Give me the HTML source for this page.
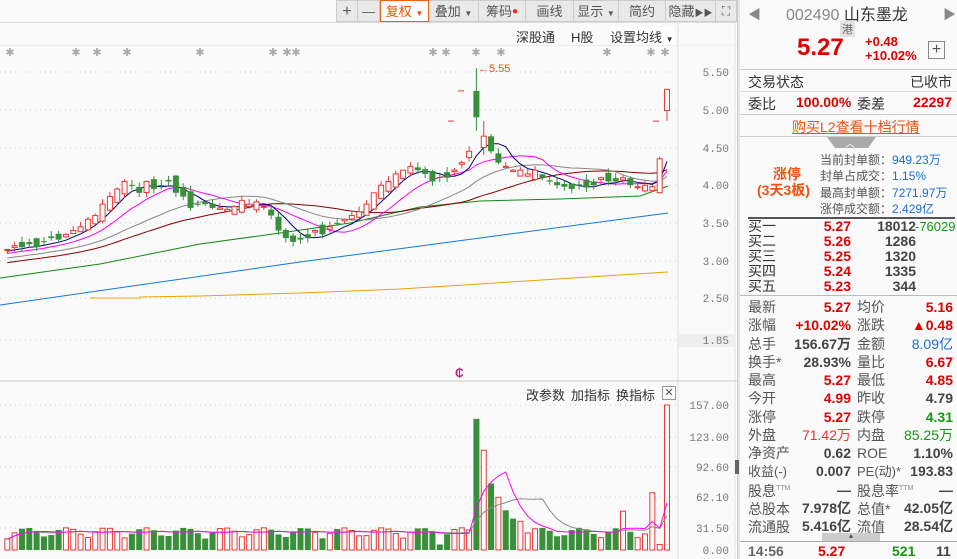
<!DOCTYPE html>
<html><head><meta charset="utf-8">
<style>
*{margin:0;padding:0;box-sizing:border-box}
body{width:957px;height:559px;overflow:hidden;background:#fafafa;font-family:"Liberation Sans","Noto Sans CJK SC",sans-serif;position:relative;font-size:13px;color:#333}
.a{position:absolute;white-space:nowrap}
.tb{position:absolute;top:0;height:22px;background:#e9e9e9;border:1px solid #ccc;border-left:none;font-size:13px;color:#555;text-align:center;line-height:21px}
.r{color:#e00000}.g{color:#119911}.b{color:#1a6fcc}.gr{color:#555}
sup{font-size:7px;line-height:0;vertical-align:6px;color:#888}
</style></head><body>
<div class="a" style="left:0;top:0;width:737px;height:23px;background:#fafafa;border-bottom:1px solid #ddd"></div>
<div class="tb" style="left:336px;width:22px;border-left:1px solid #ccc;font-size:16px">+</div>
<div class="tb" style="left:358px;width:22px">—</div>
<div class="tb" style="left:380px;width:49px;background:#fff;border:1px solid #f06010;color:#f05000">复权 <span style="font-size:8px">▼</span></div>
<div class="tb" style="left:429px;width:50px">叠加 <span style="font-size:8px">▼</span></div>
<div class="tb" style="left:479px;width:47px">筹码<span style="color:#f22;font-size:10px;vertical-align:top">●</span></div>
<div class="tb" style="left:526px;width:48px">画线</div>
<div class="tb" style="left:574px;width:45px">显示 <span style="font-size:8px">▼</span></div>
<div class="tb" style="left:619px;width:47px">简约</div>
<div class="tb" style="left:666px;width:50px">隐藏<span style="font-size:9px">▶▶</span></div>
<div class="tb" style="left:716px;width:21px;font-size:12px">⛶</div>
<div class="a" style="left:516px;top:27px;font-size:13px">深股通</div>
<div class="a" style="left:571px;top:27px;font-size:13px">H股</div>
<div class="a" style="left:610px;top:27px;font-size:13px;background:#fff">设置均线 <span style="font-size:8px">▼</span></div>
<div class="a" style="left:0;top:45px;width:678px;height:1px;background:#eee"></div>
<svg class="a" style="left:0;top:0" width="740" height="559" id="ch"></svg>
<div class="a" style="left:455px;top:366px;color:#e0108a;font-weight:bold;font-size:12px">₵</div>
<div class="a" style="left:526px;top:385px;font-size:13px">改参数</div>
<div class="a" style="left:571px;top:385px;font-size:13px">加指标</div>
<div class="a" style="left:616px;top:385px;font-size:13px">换指标</div>
<div class="a" style="left:662px;top:386px;width:14px;height:14px;border:1px solid #999;font-size:11px;line-height:12px;text-align:center;color:#555">✕</div>
<div class="a" style="left:737px;top:0;width:3px;height:559px;background:#e6e6e6;border-left:1px solid #ccc"></div>
<div class="a" style="left:735px;top:460px;width:4px;height:14px;background:#666"></div>
<div>
<div class="a" style="left:748px;top:4px;color:#888;font-size:13px">◀</div>
<div class="a" style="left:943px;top:4px;color:#888;font-size:13px">▶</div>
<div class="a" style="left:786px;top:1px;font-size:16px;color:#888">002490 <span style="color:#333">山东墨龙</span></div>
<div class="a" style="left:840px;top:21px;font-size:11px;background:#e2e2e2;color:#666;padding:0 2px">港</div>
<div class="a r" style="left:797px;top:34px;font-size:24px;font-weight:bold">5.27</div>
<div class="a r" style="left:865px;top:34px;font-size:13px;font-weight:bold">+0.48</div>
<div class="a r" style="left:865px;top:48px;font-size:13px;font-weight:bold">+10.02%</div>
<div class="a" style="left:928px;top:41px;width:17px;height:18px;border:1px solid #888;text-align:center;line-height:15px;font-size:16px;color:#555">+</div>
<div class="a" style="left:740px;top:69px;width:217px;height:1px;background:#ccc"></div>
<div class="a" style="left:748px;top:72px;font-size:14px">交易状态</div>
<div class="a" style="right:5px;top:72px;font-size:14px">已收市</div>
<div class="a" style="left:740px;top:91px;width:217px;height:1px;background:#ddd"></div>
<div class="a" style="left:748px;top:94px;font-size:14px">委比</div>
<div class="a r" style="left:796px;top:94px;font-size:14px;font-weight:bold">100.00%</div>
<div class="a" style="left:857px;top:94px;font-size:14px">委差</div>
<div class="a r" style="right:5px;top:94px;font-size:14px;font-weight:bold">22297</div>
<div class="a" style="left:740px;top:114px;width:217px;height:1px;background:#ccc"></div>
<div class="a" style="left:792px;top:117px;font-size:14px;color:#f05010;text-decoration:underline">购买L2查看十档行情</div>
<div class="a" style="left:740px;top:136px;width:217px;height:1px;background:#ccc"></div>
<div class="a" style="left:827px;top:137px;height:0;border-top:11px solid #aaa;border-left:8px solid transparent;border-right:8px solid transparent;width:49px"></div>
<div class="a" style="left:845px;top:135px;color:#fff;font-size:10px">︿</div>
<div class="a" style="left:773px;top:164px;font-size:14px;color:#f05010;font-weight:bold">涨停</div>
<div class="a" style="left:757px;top:180px;font-size:14px;color:#f05010;font-weight:bold">(3天3板)</div>
<div class="a" style="left:820px;top:152px;font-size:12px;line-height:16.3px;color:#555">当前封单额：<span class="b">949.23万</span><br>封单占成交：<span class="b">1.15%</span><br>最高封单额：<span class="b">7271.97万</span><br>涨停成交额：<span class="b">2.429亿</span></div>
<div class="a" style="left:748px;top:217px;width:207px;height:2px;background:#555"></div>
<div class="a" style="left:748px;top:219px;font-size:14px;line-height:15px">买一<br>买二<br>买三<br>买四<br>买五</div>
<div class="a r" style="left:800px;width:51px;text-align:right;top:219px;font-size:14px;line-height:15px;font-weight:bold">5.27<br>5.26<br>5.25<br>5.24<br>5.23</div>
<div class="a" style="left:860px;width:56px;text-align:right;top:219px;font-size:14px;line-height:15px;font-weight:bold;color:#444">18012<br>1286<br>1320<br>1335<br>344</div>
<div class="a g" style="left:915px;top:219px;font-size:13px">-76029</div>
<div class="a" style="left:740px;top:295px;width:217px;height:1px;background:#bbb"></div>
<div class="a" style="left:748px;top:298px;font-size:14px;line-height:18.25px;color:#555">最新<br>涨幅<br>总手<br>换手*<br>最高<br>今开<br>涨停<br>外盘<br>净资产<br><span style="font-size:13px">收益(-)</span><br>股息<sup>TTM</sup><br>总股本<br>流通股</div>
<div class="a" style="left:790px;width:61px;text-align:right;top:298px;font-size:14px;line-height:18.25px;font-weight:bold;color:#444"><span class="r">5.27</span><br><span class="r">+10.02%</span><br>156.67万<br>28.93%<br><span class="r">5.27</span><br><span class="r">4.99</span><br><span class="r">5.27</span><br><span style="color:#e33;font-weight:normal">71.42万</span><br>0.62<br>0.007<br>—<br>7.978亿<br>5.416亿</div>
<div class="a" style="left:857px;top:298px;font-size:14px;line-height:18.25px;color:#555">均价<br>涨跌<br>金额<br>量比<br>最低<br>昨收<br>跌停<br>内盘<br>ROE<br><span style="font-size:13px">PE(动)*</span><br>股息率<sup>TTM</sup><br>总值*<br>流值</div>
<div class="a" style="left:880px;width:73px;text-align:right;top:298px;font-size:14px;line-height:18.25px;font-weight:bold;color:#444"><span class="r">5.16</span><br><span class="r">▲0.48</span><br><span class="b" style="font-weight:normal">8.09亿</span><br><span class="r">6.67</span><br><span class="r">4.85</span><br>4.79<br><span class="g">4.31</span><br><span class="g" style="font-weight:normal">85.25万</span><br>1.10%<br>193.83<br>—<br>42.05亿<br>28.54亿</div>
<div class="a" style="left:822px;top:533px;width:58px;height:8px;background:#ccc;font-size:7px;text-align:center;line-height:8px;color:#555">▲</div>
<div class="a" style="left:740px;top:541px;width:217px;height:1px;background:#aaa"></div>
<div class="a" style="left:748px;top:543px;font-size:14px;color:#666;font-weight:bold">14:56</div>
<div class="a r" style="left:818px;top:543px;font-size:14px;font-weight:bold">5.27</div>
<div class="a g" style="left:892px;top:543px;font-size:14px;font-weight:bold">521</div>
<div class="a" style="left:936px;top:543px;font-size:14px;font-weight:bold;color:#444">11</div>
</div>
<script>
var C=[3.15,3.2,3.18,3.22,3.18,3.25,3.3,3.28,3.35,3.4,3.45,3.55,3.6,3.75,3.85,3.95,4.05,4.0,3.9,4.05,3.95,4.0,4.05,3.9,3.85,3.7,3.75,3.75,3.7,3.7,3.68,3.72,3.8,3.75,3.78,3.72,3.6,3.4,3.3,3.25,3.28,3.3,3.4,3.35,3.45,3.5,3.55,3.6,3.65,3.75,3.9,4.0,4.05,4.15,4.2,4.25,4.2,4.15,4.05,4.1,4.1,4.2,4.3,4.45,4.9,4.65,4.45,4.3,4.25,4.2,4.2,4.15,4.2,4.1,4.05,4.0,3.98,3.95,4.0,3.97,4.0,4.1,4.05,4.05,4.1,4.0,3.98,4.0,3.98,4.35,5.27];
function Y(p){return 72+(5.5-p)*75.5}
function X(i){return 7.3+i*7.33}
var s='';
[72,110,148,185,223,261,298,340].forEach(function(y){s+='<line x1="0" x2="678" y1="'+y+'" y2="'+y+'" stroke="#ccc" stroke-dasharray="1,4"/>'});
[405,437,467,497,528].forEach(function(y){s+='<line x1="0" x2="678" y1="'+y+'" y2="'+y+'" stroke="#ccc" stroke-dasharray="1,4"/>'});
s+='<line x1="678" x2="678" y1="23" y2="559" stroke="#ddd"/><line x1="735" x2="735" y1="23" y2="559" stroke="#e4e4e4"/>';
s+='<line x1="0" x2="737" y1="381" y2="381" stroke="#ccc"/><line x1="678" x2="737" y1="45" y2="45" stroke="#eee"/>';
s+='<rect x="679" y="334" width="56" height="13" fill="#eee"/>';
var L=[['5.50',72],['5.00',110],['4.50',148],['4.00',185],['3.50',223],['3.00',261],['2.50',298],['1.85',340],['157.00',405],['123.00',437],['92.60',467],['62.10',497],['31.50',528],['0.00',550]];
L.forEach(function(l){s+='<text x="729" y="'+(l[1]+4)+'" text-anchor="end" font-family="Liberation Mono,monospace" font-size="11" fill="#777">'+l[0]+'</text>'});
[10,76,97,127,200,273,287,296,433,446,476,501,607,651,665].forEach(function(x){s+='<text x="'+x+'" y="56" text-anchor="middle" font-size="11" fill="#aaa">✱</text>'});
function ma(n){var pts=[];for(var i=0;i<C.length;i++){var t=0;for(var k=0;k<n;k++){var j=i-k;t+=j>=0?C[j]:C[0]-(-j)*0.012;}pts.push(X(i).toFixed(1)+','+Y(t/n).toFixed(1));}return pts.join(' ');}
function pl(p,c){s+='<polyline points="'+p+'" fill="none" stroke="'+c+'" stroke-width="1"/>';}
pl('0,305 300,262 668,213','#1177dd');
pl('90,298 140,298 140,297 200,296 300,293 400,289 668,272','#f0a000');
pl('0,278 100,264 200,244 280,233 350,223 420,207 480,201 560,199 640,196 668,186','#118811');
pl(ma(30),'#880000');pl(ma(20),'#888');pl(ma(10),'#ff00ff');pl(ma(5),'#000080');
var V=[];
for(var i=0;i<C.length;i++){
 var c=C[i],o=(i?C[i-1]:c)+Math.sin(i*12.9)*0.08,h=null,l=null;
 if(i==64){o=5.25;c=4.9;h=5.55;l=4.72;}
 if(i==90){o=4.99;h=5.27;l=4.85;}
 if(i==65){o=4.5;h=4.85;l=4.4;}
 if(h===null)h=Math.max(o,c)+Math.abs(Math.sin(i*7.1))*0.07;
 if(l===null)l=Math.min(o,c)-Math.abs(Math.cos(i*3.3))*0.06;
 var up=c>=o,x=X(i),col=up?'#e83838':'#3a8f3a';
 s+='<line x1="'+x+'" x2="'+x+'" y1="'+Y(h)+'" y2="'+Y(l)+'" stroke="'+col+'"/>';
 var t=Y(Math.max(o,c)),bh=Math.max(1,Math.abs(Y(o)-Y(c)));
 if(up)s+='<rect x="'+(x-2.5)+'" y="'+t+'" width="5" height="'+bh+'" fill="#fafafa" stroke="'+col+'"/>';
 else s+='<rect x="'+(x-3)+'" y="'+t+'" width="6" height="'+bh+'" fill="'+col+'"/>';
 var v=12+Math.abs(Math.sin(i*5.7))*12;
 var sp={64:142,65:108,66:72,67:57,68:43,69:34,70:31,88:62,89:6,90:157,59:6,84:42};
 if(sp[i]!==undefined)v=sp[i];
 if(i==66||i==68||i==69)up=false; if(i==67||i==70||i==88||i==90)up=true;
 V.push(v);col=up?'#e83838':'#3a8f3a';
 var vy=550-v*145/157;
 if(up)s+='<rect x="'+(x-2.5)+'" y="'+vy+'" width="5" height="'+(550-vy)+'" fill="#fafafa" stroke="'+col+'"/>';
 else s+='<rect x="'+(x-3)+'" y="'+vy+'" width="6" height="'+(550-vy)+'" fill="'+col+'"/>';
}
function vma(n,c){var p=[];for(var i=0;i<V.length;i++){var t=0,k=0;for(;k<n&&i-k>=0;k++)t+=V[i-k];p.push(X(i).toFixed(1)+','+(550-(t/k)*145/157).toFixed(1));}pl(p.join(' '),c);}
vma(10,'#888');vma(5,'#ff00ff');
s+='<text x="478" y="72" font-size="11" fill="#f05010">←5.55</text>';
s+='<line x1="458" x2="464" y1="'+Y(5.25)+'" y2="'+Y(5.25)+'" stroke="#e33"/><line x1="448" x2="454" y1="'+Y(4.85)+'" y2="'+Y(4.85)+'" stroke="#e33"/>';
s+='<line x1="653" x2="659" y1="'+Y(4.85)+'" y2="'+Y(4.85)+'" stroke="#e33"/>';
document.getElementById('ch').innerHTML=s;
</script>
</body></html>
